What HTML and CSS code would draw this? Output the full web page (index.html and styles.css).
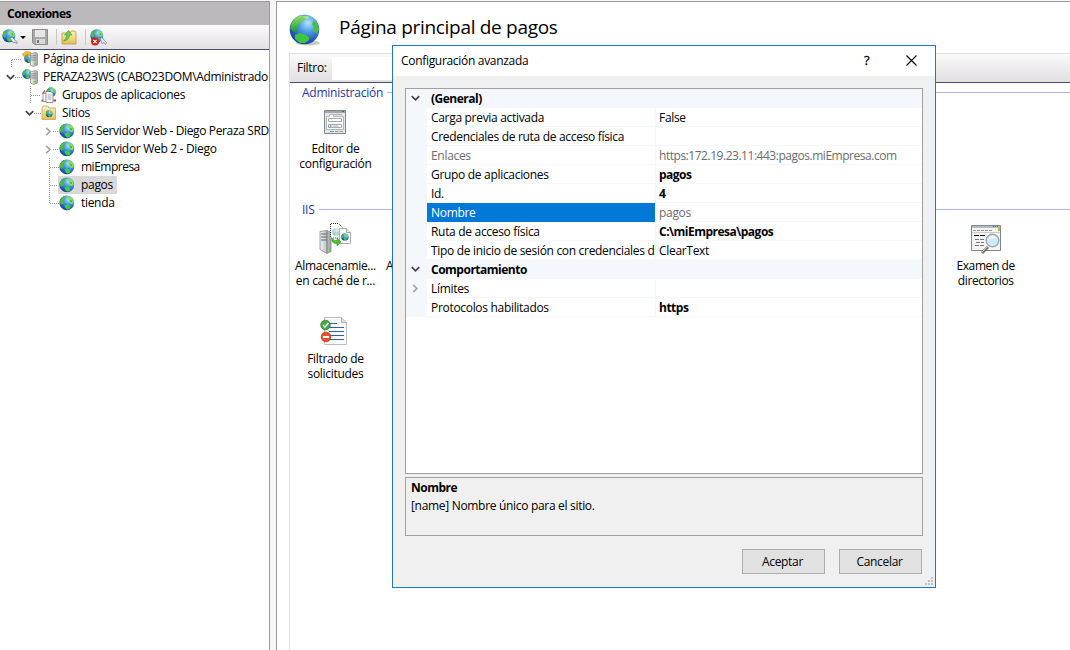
FILE: index.html
```html
<!DOCTYPE html>
<html lang="es">
<head>
<meta charset="utf-8">
<title>Página principal de pagos</title>
<link rel="stylesheet" href="styles.css">
</head>
<body>
<svg class="defs" aria-hidden="true">
  <defs>
    <radialGradient id="sea" cx=".62" cy=".28" r=".78"><stop offset="0" stop-color="#b5e4ff"/><stop offset=".4" stop-color="#4b9be4"/><stop offset=".8" stop-color="#2350b4"/><stop offset="1" stop-color="#1b3a86"/></radialGradient>
    <linearGradient id="land" x2="0" y2="1"><stop offset="0" stop-color="#8fe070"/><stop offset="1" stop-color="#159a2c"/></linearGradient>
    <linearGradient id="folder" x2="0" y2="1"><stop offset="0" stop-color="#fff3bd"/><stop offset="1" stop-color="#e8bd55"/></linearGradient>
    <linearGradient id="steel" x2="1" y2="0"><stop offset="0" stop-color="#f2f2f2"/><stop offset="1" stop-color="#9da2a7"/></linearGradient>
    <symbol id="globe" viewBox="0 0 32 32">
      <ellipse cx="19" cy="29" rx="12" ry="2.500" fill="#000" opacity=".22"/>
      <circle cx="15.500" cy="15.500" r="14.800" fill="url(#sea)"/>
      <path d="M2 10C4 5 8 2 13 1.500l4 1-1 3-4 2-1 3-3 2 0 4-3 2-4-4z" fill="url(#land)"/>
      <path d="M25 6l4 4 1 6-3 4-2-3 0-4-2-3z" fill="#49bd45"/>
      <path d="M6 21l5-2 4 1 5 3 0 3-4 3-5 0-5-4z" fill="#3cc442"/>
      <path d="M14 3l3-1 4 1-3 2z" fill="#a7e98c"/>
    </symbol>
    <symbol id="globe-small" viewBox="0 0 16 16">
      <circle cx="7.800" cy="7.800" r="7.400" fill="url(#sea)"/>
      <path d="M1 5.500C2 3 4 1.200 6.500.8L6 3.500 4.500 5.500v3L2.500 10 .8 8z" fill="#4cb848"/>
      <path d="M9.500 2.200l2.200-.4L14 4.500l.8 3-1.600 1.500-2-.5-.7-2.500-1.500-1.500z" fill="#7fe25a"/>
      <path d="M5.500 10l3-.3 3 1.300-.5 2.500-2.500 1.200-2-1.500z" fill="#3bd13d"/>
      <path d="M11.500 5l1 2" stroke="#2a9532" stroke-width="1"/>
    </symbol>
    <symbol id="server" viewBox="0 0 16 16">
      <path d="M8.500 3l5-1.500 2 1V14l-4 1.500-3-1.500z" fill="url(#steel)" stroke="#8a8a8a" stroke-width=".7"/>
      <path d="M9 5l5-.5M9 7l5-.3M9 9h5" stroke="#777" stroke-width=".8"/><path d="M12 12h2v1.500h-2z" fill="#75cf2c"/>
    </symbol>
    <symbol id="down" viewBox="0 0 9 7"><path d="M.8 1.200l3.700 3.700 3.700-3.700" fill="none" stroke="#444" stroke-width="1.700"/></symbol>
    <symbol id="right" viewBox="0 0 7 9"><path d="M1.200.8l3.700 3.700-3.700 3.700" fill="none" stroke="#a6a6a6" stroke-width="1.700"/></symbol>
  </defs>
</svg>

<div class="app">
  <aside class="side">
    <h2 class="side-title">Conexiones</h2>
    <div class="toolbar">
      <svg class="tool-connect" viewBox="0 0 16 16"><use href="#globe-small" width="14" height="14"/><path d="M8 9.500l2-1.500 3.500 3.500 2 1.500-1 2-1-2-2 1z" fill="#dbe6ee" stroke="#74899a" stroke-width=".8"/></svg>
      <i class="caret"></i>
      <svg class="tool-save" viewBox="0 0 16 16"><path d="M.5.5h15v15h-13l-2-2z" fill="#a8a8a8" stroke="#8c8c8c"/><path d="M3 1h10v7H3z" fill="#e6e6e6"/><path d="M4 10h9v5H4z" fill="#d9d9d9"/><path d="M5 11h2v3H5z" fill="#777"/></svg>
      <i class="sep"></i>
      <svg class="tool-up" viewBox="0 0 16 16"><path d="M1 4h8l1-2h4l1 2v11H1z" fill="url(#folder)" stroke="#bb973d" stroke-width=".8"/><path d="M2.500 12C5 10 5.500 8 5.500 6H3.500l4-4.500 3.500 4.500H8.500c0 3-2 5.500-6 6z" fill="#6ccf48" stroke="#3b9a2c" stroke-width=".6"/></svg>
      <i class="sep"></i>
      <svg class="tool-stop" viewBox="0 0 17 17"><use href="#globe-small" width="14" height="14"/><path d="M10 9.500l2-1 2.500 3 2 2-1 2-1.500-2-2 1z" fill="#dbe6ee" stroke="#74899a" stroke-width=".8"/><circle cx="5" cy="12.500" r="4" fill="#cb2020"/><path d="M3.400 10.900l3.200 3.200m0-3.200l-3.200 3.200" stroke="#fff" stroke-width="1.300"/></svg>
    </div>
    <ul class="tree">
      <li class="l1 home"><span class="tw"></span><i class="dots"></i>
        <svg class="ti" viewBox="0 0 16 16"><use href="#globe-small" x="2" y="2.500" width="10" height="10"/><path d="M0 3.500l4-3 4 .5 3 2.500-1 2.500-2.500-2-3-.5-2 2z" fill="#f5bd3b" stroke="#d48917" stroke-width=".6"/><use href="#server" width="16" height="16"/></svg><span class="t">Página de inicio</span></li>
      <li class="l1 host"><span class="tw"><svg class="down"><use href="#down"/></svg></span><i class="dots"></i>
        <svg class="ti" viewBox="0 0 16 16"><use href="#globe-small" width="10.500" height="10.500"/><use href="#server" width="16" height="16"/></svg><span class="t t-host">PERAZA23WS (CABO23DOM\Administrado</span></li>
      <li class="l2 pools"><span class="tw"></span><i class="dots"></i>
        <svg class="ti" viewBox="0 0 16 16"><use href="#globe-small" x="5" width="10.500" height="10.500"/><path d="M.5 12.500h2.500v2H.5zM12.500 12.500H15v2h-2.500z" fill="#c32e2e"/><path d="M1.500 7l2.500-3.500" stroke="#d65050" stroke-width="1.500"/><path d="M2 6.500h6v8H2z" fill="#fff" stroke="#888" stroke-width=".8"/><path d="M5 4.500h5l2 2v9H5z" fill="#fff" stroke="#777" stroke-width=".8"/><path d="M6.500 8h4m-4 2h4m-4 2h4" stroke="#8399bb" stroke-width=".9"/></svg><span class="t">Grupos de aplicaciones</span></li>
      <li class="l2 sites"><span class="tw"><svg class="down"><use href="#down"/></svg></span><i class="dots"></i>
        <svg class="ti" viewBox="0 0 16 16"><path d="M1 3l1-2h5l1 2h6.500v11.500H1z" fill="url(#folder)" stroke="#c7a451" stroke-width=".8"/><use href="#globe-small" x="4.500" y="5" width="7.500" height="7.500"/></svg><span class="t">Sitios</span></li>
      <li class="l3"><span class="tw"><svg class="right"><use href="#right"/></svg></span><i class="dots"></i><svg class="ti"><use href="#globe-small"/></svg><span class="t t-site">IIS Servidor Web - Diego Peraza SRD</span></li>
      <li class="l3"><span class="tw"><svg class="right"><use href="#right"/></svg></span><i class="dots"></i><svg class="ti"><use href="#globe-small"/></svg><span class="t">IIS Servidor Web 2 - Diego</span></li>
      <li class="l3 leaf"><span class="tw"></span><i class="dots"></i><svg class="ti"><use href="#globe-small"/></svg><span class="t t-leaf">miEmpresa</span></li>
      <li class="l3 leaf"><span class="tw"></span><i class="dots"></i><span class="picked"><svg class="ti"><use href="#globe-small"/></svg><span class="t">pagos</span></span></li>
      <li class="l3 leaf last"><span class="tw"></span><i class="dots"></i><svg class="ti"><use href="#globe-small"/></svg><span class="t">tienda</span></li>
    </ul>
  </aside>

  <main class="main">
    <header class="head"><svg class="head-icon"><use href="#globe"/></svg><h1>Página principal de pagos</h1></header>
    <section class="panel">
      <div class="filter"><span class="t">Filtro:</span><span class="filter-input"></span></div>
      <h3 class="group"><span>Administración</span></h3>
      <div class="items admin">
        <div class="item">
          <svg viewBox="0 0 32 32"><path d="M5.500 4.500h21v23h-21z" fill="#e5e6e8" stroke="#85888b"/><path d="M6 5h20v2H6z" fill="#a2a6ab"/><path d="M23 5h2v1h-2z" fill="#256fb2"/><path d="M7.500 10.500h3v-2h4v2h10v13h-17z" fill="#fafafa" stroke="#b5b5b5"/><path d="M15 8.500h8M9.500 12.500h13v3h-13zM9.500 18.500h13v3h-13z" fill="#fff" stroke="#aaa"/><path d="M11 20h1.500" stroke="#17b7ec" stroke-width="1.500"/><path d="M13.500 20h6" stroke="#aaa"/><path d="M11 25.500h4" stroke="#17b7ec"/><path d="M16 25.500h8" stroke="#999" stroke-dasharray="3.500 1"/></svg>
          <span>Editor de</span><span>configuración</span></div>
      </div>
      <h3 class="group"><span>IIS</span></h3>
      <div class="items iis">
        <div class="item">
          <svg viewBox="0 0 32 32"><path d="M1 8.500l7-1 4 2v19l-4 2-7-4z" fill="url(#steel)" stroke="#888" stroke-width=".8"/><path d="M2 11h6m-6 3h6m-6 3h6" stroke="#666"/><path d="M8 8v22" stroke="#777"/><path d="M10 25h2v2h-2z" fill="#68cf2e"/><path d="M11.500 14V.5h8l4 4V15h-12" fill="#fff" fill-opacity=".8" stroke="#333" stroke-dasharray="1 1"/><use href="#globe-small" x="13" y="5" width="8" height="8" opacity=".4"/><path d="M20.500 5.500h7l4 4v11h-11z" fill="#fff" stroke="#b0b0b0"/><path d="M27.500 5.500v4h4" fill="#eee" stroke="#a6a6a6"/><use href="#globe-small" x="22" y="10" width="8" height="8"/><path d="M13 15c1 2 3 2.500 5 2.500V15l4 4-4 4v-2.500c-4 0-6-2-5-5.500z" fill="#4dbf33" stroke="#3a9c2e" stroke-width=".6"/></svg>
          <span>Almacenamie...</span><span>en caché de r...</span></div>
        <div class="item cut"><i></i><span>A</span></div>
        <div class="item examen">
          <svg viewBox="0 0 32 32"><path d="M1.500 2.500h29v25h-29z" fill="#f5f5f5" stroke="#838689"/><path d="M2 3h28v2H2z" fill="#b2bdc6"/><path d="M23 3.500h6" stroke="#467198" stroke-dasharray="1 1"/><path d="M3 7.500h20" stroke="#999" stroke-dasharray="3 1"/><path d="M2 9.500h28" stroke="#ccc"/><path d="M28 5h2v3h-2z" fill="#93d125"/><path d="M4 12.500h12" stroke="#111" stroke-dasharray="5 1"/><path d="M5 16.500h9m-8 3h8m-9 3h9" stroke="#777" stroke-dasharray="4 1"/><path d="M12 30l6-6" stroke="#777" stroke-width="3"/><path d="M12 29l6-6" stroke="#ccc"/><circle cx="22.500" cy="17.500" r="6.300" fill="#cfeaff" stroke="#a1a9b0" stroke-width="1.400"/><path d="M18 17c1-5 5-5 8-2-3 0-5 0-8 2" fill="#fff"/></svg>
          <span class="tight">Examen de</span><span class="tight">directorios</span></div>
        <div class="item">
          <svg viewBox="0 0 32 32"><path d="M5.500 1.500h17l5 5v22h-22z" fill="#fafafa" stroke="#bdbdbd"/><path d="M22.500 1.500v5h5" fill="#ddd" stroke="#b0b0b0"/><path d="M10 7.500h8m-8 4h15m-15 4h15m-15 4h15m-15 4h15" stroke="#2b62a7"/><circle cx="6.500" cy="9" r="4.800" fill="#4ba546" stroke="#277b28" stroke-width=".7"/><path d="M4 9l2 2 3.500-4" fill="none" stroke="#fff" stroke-width="1.500"/><circle cx="7" cy="21" r="4.800" fill="#ea4e2c" stroke="#b82a16" stroke-width=".7"/><path d="M4 21h6" stroke="#fff" stroke-width="2"/></svg>
          <span>Filtrado de</span><span>solicitudes</span></div>
      </div>
    </section>
  </main>
</div>

<div class="dialog">
  <div class="dialog-bar"><span class="t">Configuración avanzada</span><span class="help">?</span><svg class="close" viewBox="0 0 11 11"><path d="M.5.5l10 10m0-10l-10 10" stroke="#000" stroke-width="1.100"/></svg></div>
  <div class="dialog-body">
    <div class="grid">
      <div class="cat"><i><svg class="down"><use href="#down"/></svg></i><b>(General)</b></div>
      <div class="row"><i></i><span>Carga previa activada</span><span>False</span></div>
      <div class="row"><i></i><span>Credenciales de ruta de acceso física</span><span></span></div>
      <div class="row dim"><i></i><span>Enlaces</span><span class="url">https:172.19.23.11:443:pagos.miEmpresa.com</span></div>
      <div class="row"><i></i><span>Grupo de aplicaciones</span><b>pagos</b></div>
      <div class="row"><i></i><span>Id.</span><b>4</b></div>
      <div class="row dim active"><i></i><span>Nombre</span><span>pagos</span></div>
      <div class="row"><i></i><span>Ruta de acceso física</span><b>C:\miEmpresa\pagos</b></div>
      <div class="row"><i></i><span>Tipo de inicio de sesión con credenciales d</span><span>ClearText</span></div>
      <div class="cat"><i><svg class="down"><use href="#down"/></svg></i><b>Comportamiento</b></div>
      <div class="row"><i><svg class="right"><use href="#right"/></svg></i><span>Límites</span><span></span></div>
      <div class="row"><i></i><span>Protocolos habilitados</span><b>https</b></div>
    </div>
    <div class="desc"><b>Nombre</b><span>[name] Nombre único para el sitio.</span></div>
    <div class="buttons"><button>Aceptar</button><button>Cancelar</button></div>
  </div>
  <svg class="grip" viewBox="0 0 8 8"><path d="M6 0h2v2H6zM3 3h2v2H3zM6 3h2v2H6zM0 6h2v2H0zM3 6h2v2H3zM6 6h2v2H6z" fill="#bfbfbf"/></svg>
</div>
</body>
</html>
```
FILE: styles.css
```css
* { box-sizing: border-box; }
body {
  margin: 0; width: 1070px; height: 650px; overflow: hidden;
  background: #f6f6f6; color: #000;
  font: 12px/18px "Open Sans", "Noto Sans", sans-serif;
  letter-spacing: -0.31px;
}
h1, h2, h3, ul { margin: 0; padding: 0; font-weight: normal; }
b { font-weight: 700; letter-spacing: -0.5px; }
svg { display: block; flex: none; }
.defs { position: absolute; width: 0; height: 0; }
.down { width: 9px; height: 7px; }
.right { width: 7px; height: 9px; }

.app { display: flex; gap: 6px; height: 650px; padding-top: 1px; }
.side { width: 270px; flex: none; background: #fff; border: 1px solid #9b9b9b; border-width: 1px 1px 0 0; overflow: hidden; }
.side-title { height: 23px; padding-left: 7px; background: #bbb9bb; font-size: 12px; font-weight: 700; line-height: 24px; letter-spacing: -0.5px; }
.toolbar { display: flex; align-items: center; height: 25px; padding-left: 2px; background: linear-gradient(#fbfbfb, #e3e1e3); border-bottom: 1px solid #4e4b70; }
.tool-connect, .tool-up { width: 16px; height: 16px; }
.caret { border: 3px solid transparent; border-top-color: #000; border-bottom: 0; margin: 0 6px 0 2px; }
.tool-save { width: 16px; height: 16px; }
.sep { width: 1px; height: 16px; background: #c9c7b6; margin: 0 4px 0 8px; }
.tool-stop { width: 17px; height: 17px; }

.tree { list-style: none; }
.tree li { display: flex; align-items: center; height: 18px; white-space: nowrap; background-repeat: no-repeat; }
.tw { display: flex; align-items: center; justify-content: center; width: 9px; height: 18px; flex: none; }
.dots { height: 1px; flex: none; background: repeating-linear-gradient(90deg, #999 0 1px, transparent 1px 2px); }
.ti { width: 16px; height: 16px; }
.tree .t { padding-left: 5px; }
.tree .t-host { letter-spacing: -0.33px; }
.tree .t-site { letter-spacing: -0.36px; }
.tree .t-leaf { letter-spacing: -0.5px; }
.l1 { padding-left: 6px; }
.l1 .dots { width: 7px; }
.l2 { padding-left: 25px; }
.l2 .dots { width: 7px; }
.l3 { padding-left: 44px; }
.l3 .dots { width: 6px; margin-right: 1px; }
.l3 .ti { margin-left: -1px; margin-right: 1px; }
.home { background: repeating-linear-gradient(#999 0 1px, transparent 1px 2px) 11px 10px / 1px 8px; }
.home .dots { width: 10px; margin-left: -3px; }
.pools { background: repeating-linear-gradient(#999 0 1px, transparent 1px 2px) 30px 0 / 1px 18px; }
.pools .dots { width: 10px; margin-left: -3px; }
.leaf .dots { width: 9px; margin-left: -3px; }
.leaf { background: repeating-linear-gradient(#999 0 1px, transparent 1px 2px) 49px 0 / 1px 18px; }
.last { background-size: 1px 9px; }
.picked { display: flex; align-items: center; height: 18px; margin-left: -2px; padding: 0 4px 0 2px; background: #d9d9d9; }

.main { flex: 1; background: #fff; border: 1px solid #9b9b9b; border-width: 1px 0 0 1px; padding-left: 12px; }
.head { display: flex; align-items: center; height: 51px; }
.head-icon { width: 32px; height: 32px; margin-top: 5px; }
.head h1 { margin-top: -2px; font-size: 19px; line-height: 24px; letter-spacing: -0.3px; padding-left: 18px; }
.panel { height: 597px; border: 1px solid #dedede; border-width: 1px 0 0 1px; }
.filter { display: flex; align-items: center; height: 29px; padding-left: 7px; background: linear-gradient(#fafafa, #e1dfe1); border-bottom: 1px solid #4e4b70; }
.filter .t { width: 35px; }
.filter-input { width: 300px; height: 23px; background: #fff; }
.group { display: flex; align-items: center; gap: 4px; height: 20px; padding-left: 12px; color: #1e3a9c; font-size: 12px; letter-spacing: -0.24px; }
.group::after { content: ""; flex: 1; height: 1px; margin-bottom: 2px; background: #aab9dd; }
.items { display: grid; grid-template-columns: repeat(7, 92.9px) 1fr; grid-auto-rows: 93px; margin-left: -1px; }
.admin { height: 97px; padding-top: 3px; }
.iis { padding-top: 3px; }
.item { display: flex; flex-direction: column; align-items: center; line-height: 15px; white-space: nowrap; }
.item svg { width: 32px; height: 32px; margin-bottom: 3px; }
.cut { align-items: flex-start; padding-left: 4px; }
.cut i { height: 35px; }
.tight { letter-spacing: -0.4px; }
.examen { grid-column: 8; width: 92.9px; }

.dialog { position: absolute; left: 392px; top: 45px; width: 544px; height: 543px; border: 1px solid #1979ca; background: #f0f0f0; }
.dialog-bar { display: flex; align-items: center; height: 30px; padding: 0 18px 0 8px; background: #fff; }
.dialog-bar .t { flex: 1; }
.help { font-size: 13px; width: 7px; margin: -2px 35px 0 0; -webkit-text-stroke: 0.3px #000; }
.close { width: 11px; height: 11px; margin-top: -2px; }
.dialog-body { padding: 12px; }
.grid { height: 386px; border: 1px solid #a0a0a0; background: #fff; }
.row, .cat { display: grid; height: 19px; line-height: 20px; white-space: nowrap; }
.row { grid-template-columns: 21px 228px 1fr; }
.cat { grid-template-columns: 21px 1fr; background: #f4f7fc; }
.row > i, .cat > i { display: flex; align-items: center; justify-content: center; padding-right: 2px; background: #f4f7fc; }
.row > span, .row > b, .cat > b { height: 19px; padding-left: 4px; overflow: hidden; border-bottom: 1px solid #f4f7fc; }
.row > :nth-child(3) { border-left: 1px solid #f4f7fc; padding-left: 3px; }
.row > .url { letter-spacing: -0.47px; }
.dim { color: #6d6d6d; }
.active > :nth-child(2) { background: #0078d7; color: #fff; border-bottom-color: #0078d7; }
.desc { display: flex; flex-direction: column; height: 59px; margin-top: 3px; padding: 1px 5px; border: 1px solid #a0a0a0; }
.buttons { display: flex; justify-content: flex-end; gap: 14px; padding: 13px 1px 0 0; }
button { width: 83px; height: 25px; padding: 0 2px 0 0; border: 1px solid #adadad; background: #e1e1e1; font: inherit; letter-spacing: inherit; color: #000; }
.grip { position: absolute; right: 2px; bottom: 2px; width: 8px; height: 8px; }
```
